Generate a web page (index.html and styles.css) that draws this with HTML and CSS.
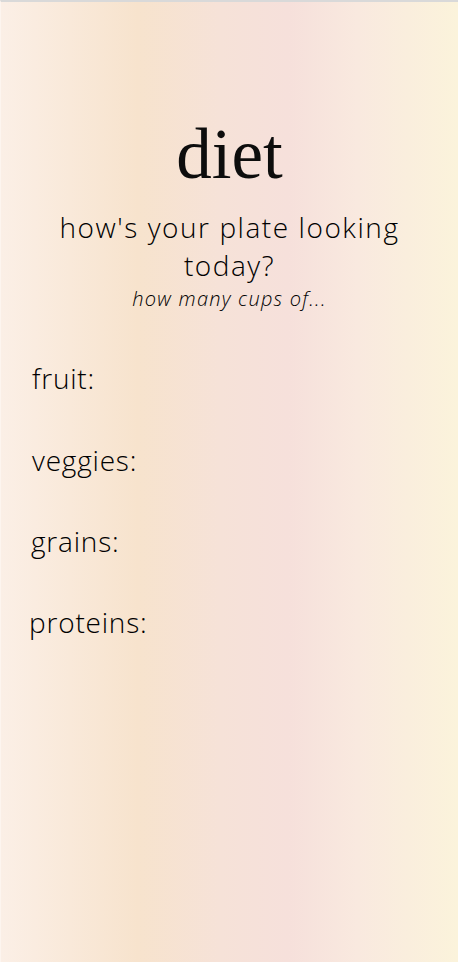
FILE: index.html
```html
<!DOCTYPE html>
<html lang="en">
<head>
<meta charset="utf-8">
<title>diet</title>
<link rel="stylesheet" href="styles.css">
</head>
<body>
<main class="page">
  <header class="intro">
    <h1 class="title">diet</h1>
    <h2 class="question">how's your plate looking today?</h2>
    <p class="hint">how many cups of...</p>
  </header>
  <form class="cups">
    <label class="food food-fruit">fruit:</label>
    <label class="food food-veggies">veggies:</label>
    <label class="food food-grains">grains:</label>
    <label class="food food-proteins">proteins:</label>
  </form>
</main>
</body>
</html>
```
FILE: styles.css
```css
html, body {
  margin: 0;
  padding: 0;
}
body {
  width: 458px;
  height: 962px;
  overflow: hidden;
}
.page {
  box-sizing: border-box;
  height: 962px;
  border-top: 2px solid #d9d9d9;
  border-left: 1px solid #fdf5ef;
  background: linear-gradient(90deg, #fbefe6 0%, #f7e3cd 30%, #f6e2d8 48%, #f6e0db 63%, #f9e9df 78%, #fbf3db 100%);
  color: #000;
  font-family: "Open Sans", Lato, sans-serif;
  display: flex;
  flex-direction: column;
}
.intro {
  display: flex;
  flex-direction: column;
  align-items: center;
  text-align: center;
  padding-top: 112px;
}
.title {
  margin: 0;
  font-family: "Liberation Serif", "DejaVu Serif", serif;
  font-weight: 400;
  font-size: 71px;
  line-height: 80px;
  color: #0d0d0d;
}
.question {
  margin: 14px 0 0;
  width: 390px;
  font-weight: 300;
  font-size: 28px;
  line-height: 38px;
  letter-spacing: 1.55px;
}
.hint {
  margin: 3px 0 0;
  font-style: italic;
  font-weight: 300;
  font-size: 20px;
  line-height: 24px;
  letter-spacing: 1.25px;
}
.cups {
  display: flex;
  flex-direction: column;
  gap: 51.5px;
  padding: 51.5px 0 0 31px;
}
.food {
  font-weight: 300;
  font-size: 28px;
  line-height: 30px;
  letter-spacing: 0.8px;
}
.food-veggies { margin-top: 1px; }
.food-grains { margin-left: -1px; margin-top: -1px; }
.food-proteins { margin-left: -3px; }
```
